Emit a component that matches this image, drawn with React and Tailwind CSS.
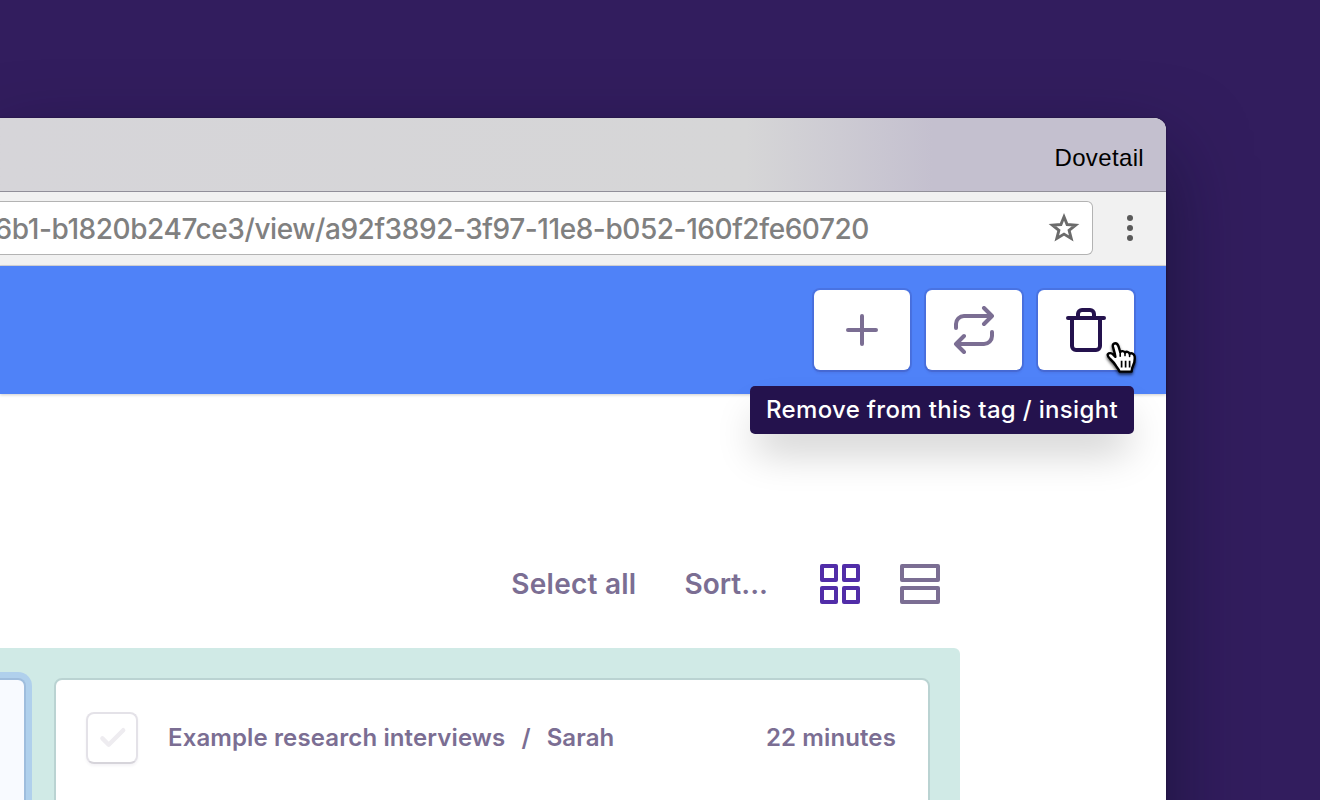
function PlusIcon() {
  return (
    <svg width="48" height="48" viewBox="0 0 24 24" fill="none" stroke="#7b6e93" strokeWidth="2" strokeLinecap="round">
      <path d="M12 5v14M5 12h14" />
    </svg>
  );
}

function RepeatIcon() {
  return (
    <svg width="48" height="48" viewBox="0 0 24 24" fill="none" stroke="#7b6e93" strokeWidth="2" strokeLinecap="round" strokeLinejoin="round">
      <path d="M17 1l4 4-4 4M3 11V9a4 4 0 0 1 4-4h14M7 23l-4-4 4-4M21 13v2a4 4 0 0 1-4 4H3" />
    </svg>
  );
}

function TrashIcon() {
  return (
    <svg width="48" height="48" viewBox="0 0 24 24" fill="none" stroke="#24124d" strokeWidth="2" strokeLinecap="round" strokeLinejoin="round">
      <path d="M3 6h18M5 6v14a2 2 0 0 0 2 2h10a2 2 0 0 0 2-2V6M8 6V4a2 2 0 0 1 2-2h4a2 2 0 0 1 2 2v2" />
    </svg>
  );
}

function StarIcon() {
  return (
    <svg className="shrink-0" width="32" height="32" viewBox="0 0 32 32" fill="none" stroke="#6b6b6b" strokeWidth="2.9">
      <path d="M16 4.8l3.1 7.7 8.5.6-6.5 5.3 2.1 8.1-7.2-4.4-7.2 4.4 2.1-8.1-6.5-5.3 8.5-.6z" />
    </svg>
  );
}

function HandCursor() {
  return (
    <svg
      className="absolute top-[71px] left-[67px] z-20 overflow-visible drop-shadow-[0_2px_1.5px_rgba(0,0,0,0.65)]"
      width="34"
      height="36"
      viewBox="0 0 34 36"
    >
      <path
        d="M11.2 25.2C9.4 22.2 7.6 20.2 5.2 18C3 15.8 2 14.2 3 13C4.2 11.6 6.4 12 8 13.4L10.4 15.8C10.1 12.4 8.8 9 8 6.2C7.3 3.6 8.6 2.2 10.2 2.2C12 2.2 13 3.6 13.6 5.6L15.2 11C16 9.8 19.2 9.6 20 11.6C21.2 10.2 24 10.6 24.6 12.8C26.4 11.6 29.2 12.6 29.6 15.2C30 18.6 29.4 22 28 24.8C27.2 26.4 26.8 27.6 26.6 30.6H14.6C13.8 28.6 12.6 27 11.2 25.2Z"
        fill="#fff"
        stroke="#000"
        strokeWidth="2.4"
        strokeLinejoin="round"
      />
      <path d="M15.2 10.6v4.6M20 11.6v3M24.6 13v2.4" stroke="#000" strokeWidth="1.6" strokeLinecap="round" />
      <path d="M16.6 19.8v6.8M20.6 19.8v6.8M24.6 19.8v6.8" stroke="#000" strokeWidth="1.7" />
    </svg>
  );
}

function ToolButton({ children }) {
  return (
    <button className="relative flex h-20 w-24 items-center justify-center rounded-md bg-white shadow-[0_0_0_2px_rgba(36,18,77,0.13),0_3px_3px_rgba(36,18,77,0.1)]">
      {children}
    </button>
  );
}

export default function App() {
  return (
    <div className="h-[800px] w-[1320px] overflow-hidden bg-[#321d5e] pt-[118px] font-['Inter',sans-serif]">
      <div className="flex h-[800px] w-[1166px] flex-col overflow-visible rounded-tr-[12px] bg-white shadow-[0_0_2px_rgba(0,0,0,0.4),0_36px_80px_rgba(8,12,30,0.52)]">
        <header className="flex h-[74px] shrink-0 items-center justify-end rounded-tr-[12px] border-b border-[#918f99] bg-linear-to-r from-[#d6d5d9] from-0% via-[#d6d6d7] via-64% to-[#c4c0cf] to-80% pr-[22px] pt-[6px]">
          <span className="font-['Liberation_Sans',sans-serif] text-[24px] leading-8 tracking-[0.35px] text-black">Dovetail</span>
        </header>

        <div className="flex h-[74px] shrink-0 items-start border-b border-[#d5d5d8] bg-[#f1f1f1] pt-[9px]">
          <div className="flex h-[54px] w-[1093px] items-center justify-end overflow-hidden rounded-r-[6px] border border-l-0 border-[#b3b3b3] bg-white pr-[12px]">
            <span className="mr-[179px] pt-px text-[28px] leading-8 font-medium tracking-[-0.43px] whitespace-nowrap text-[#808080]">
              6b1-b1820b247ce3/view/a92f3892-3f97-11e8-b052-160f2fe60720
            </span>
            <StarIcon />
          </div>
          <div className="ml-[34px] flex flex-col gap-1 pt-[14px]">
            <span className="size-[6px] rounded-full bg-[#5a5a5a]" />
            <span className="size-[6px] rounded-full bg-[#5a5a5a]" />
            <span className="size-[6px] rounded-full bg-[#5a5a5a]" />
          </div>
        </div>

        <nav className="relative flex h-32 shrink-0 items-center justify-end gap-4 bg-[#4f82f8] pr-8 shadow-[0_1px_3px_rgba(0,0,0,0.2)]">
          <ToolButton><PlusIcon /></ToolButton>
          <ToolButton><RepeatIcon /></ToolButton>
          <div className="relative">
            <ToolButton><TrashIcon /></ToolButton>
            <div className="absolute top-[96px] right-0 z-10 flex h-12 w-[384px] items-center justify-center rounded-[5px] bg-[#24124d] shadow-[0_24px_40px_-6px_rgba(0,0,0,0.2)]">
              <span className="text-[24px] leading-8 font-medium tracking-[0.33px] whitespace-nowrap text-white">Remove from this tag / insight</span>
            </div>
            <div className="absolute top-[-20px] left-0"><HandCursor /></div>
          </div>
        </nav>

        <main className="flex flex-1 flex-col">
          <div className="flex h-[254px] w-[940px] shrink-0 items-end justify-end pb-[44px] text-[28px] leading-10 font-semibold text-[#7b6e93]">
            <span className="mr-[48px] tracking-[0.25px]">Select all</span>
            <span className="mr-[52px]">Sort...</span>
            <div className="mr-10 grid grid-cols-2 gap-1">
              <i className="size-[18px] rounded-[2px] border-4 border-[#512da8]" />
              <i className="size-[18px] rounded-[2px] border-4 border-[#512da8]" />
              <i className="size-[18px] rounded-[2px] border-4 border-[#512da8]" />
              <i className="size-[18px] rounded-[2px] border-4 border-[#512da8]" />
            </div>
            <div className="flex flex-col gap-1">
              <i className="h-[18px] w-10 rounded-[2px] border-4 border-[#7b6e93]" />
              <i className="h-[18px] w-10 rounded-[2px] border-4 border-[#7b6e93]" />
            </div>
          </div>

          <section className="flex w-[960px] flex-1 gap-7 rounded-tr-md bg-[#d0eae6] pt-[30px]">
            <div className="h-[240px] w-[26px] shrink-0 rounded-tr-lg border-2 border-l-0 border-[#9fbddd] bg-[#f8faff] shadow-[0_0_0_6px_#b0d0ec]" />
            <article className="flex h-[240px] w-[876px] items-start rounded-lg border-2 border-[#bad3d2] bg-white pt-8 pr-8 pl-[30px]">
              <div className="flex size-[52px] shrink-0 items-center justify-center rounded-lg border-2 border-[#e4e2e8] border-b-[#d6d4da] bg-white shadow-[0_2px_3px_rgba(36,18,77,0.05)]">
                <svg width="48" height="48" viewBox="0 0 48 48" fill="none" stroke="#eeecf0" strokeWidth="4.4" strokeLinecap="round" strokeLinejoin="round">
                  <path d="M14.4 24.4l6.3 6.3L35.2 16.2" />
                </svg>
              </div>
              <div className="flex h-[52px] flex-1 items-center pl-[30px] text-[24px] leading-8 font-semibold tracking-[0.12px] text-[#7b6e93]">
                <span>Example research interviews</span>
                <span className="mx-4">/</span>
                <span>Sarah</span>
                <span className="ml-auto">22 minutes</span>
              </div>
            </article>
          </section>
        </main>
      </div>
    </div>
  );
}
